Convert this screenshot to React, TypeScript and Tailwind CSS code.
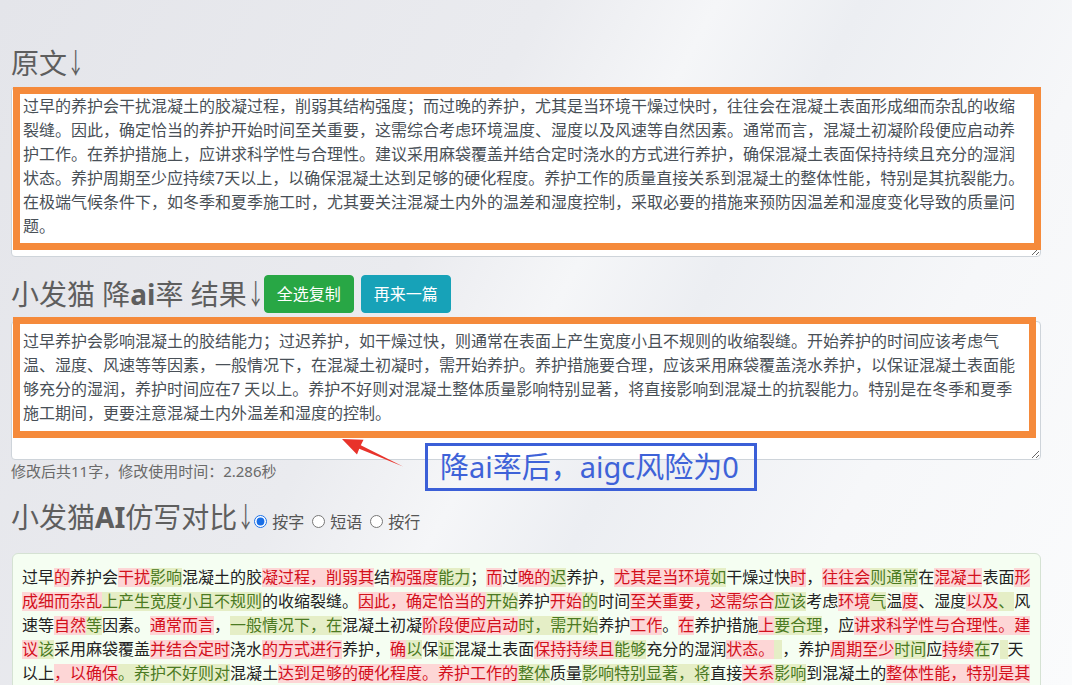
import React from "react";

type Seg = [number, string];

const ORIG = [
  "过早的养护会干扰混凝土的胶凝过程，削弱其结构强度；而过晚的养护，尤其是当环境干燥过快时，往往会在混凝土表面形成细而杂乱的收缩",
  "裂缝。因此，确定恰当的养护开始时间至关重要，这需综合考虑环境温度、湿度以及风速等自然因素。通常而言，混凝土初凝阶段便应启动养",
  "护工作。在养护措施上，应讲求科学性与合理性。建议采用麻袋覆盖并结合定时浇水的方式进行养护，确保混凝土表面保持持续且充分的湿润",
  "状态。养护周期至少应持续7天以上，以确保混凝土达到足够的硬化程度。养护工作的质量直接关系到混凝土的整体性能，特别是其抗裂能力。",
  "在极端气候条件下，如冬季和夏季施工时，尤其要关注混凝土内外的温差和湿度控制，采取必要的措施来预防因温差和湿度变化导致的质量问",
  "题。",
].join("\n");

const RESULT = [
  "过早养护会影响混凝土的胶结能力；过迟养护，如干燥过快，则通常在表面上产生宽度小且不规则的收缩裂缝。开始养护的时间应该考虑气",
  "温、湿度、风速等等因素，一般情况下，在混凝土初凝时，需开始养护。养护措施要合理，应该采用麻袋覆盖浇水养护，以保证混凝土表面能",
  "够充分的湿润，养护时间应在7 天以上。养护不好则对混凝土整体质量影响特别显著，将直接影响到混凝土的抗裂能力。特别是在冬季和夏季",
  "施工期间，更要注意混凝土内外温差和湿度的控制。",
].join("\n");

const DIFF: Seg[][] = [
  [
    [0, "过早"], [1, "的"], [0, "养护会"], [1, "干扰"], [2, "影响"], [0, "混凝土的胶"],
    [1, "凝过程，削弱其"], [0, "结"], [1, "构强度"], [2, "能力"], [0, "；"], [1, "而"],
    [0, "过"], [1, "晚的"], [2, "迟"], [0, "养护，"], [1, "尤其是当环境"], [2, "如"],
    [0, "干燥过快"], [1, "时"], [0, "，"], [1, "往往会"], [2, "则通常"], [0, "在"],
    [1, "混凝土"], [0, "表面"], [1, "形"],
  ],
  [
    [1, "成细而杂乱"], [2, "上产生宽度小且不规则"], [0, "的收缩裂缝。"], [1, "因此，确定恰当的"],
    [2, "开始"], [0, "养护"], [1, "开始"], [2, "的"], [0, "时间"], [1, "至关重要，这需综合"],
    [2, "应该"], [0, "考虑"], [1, "环境"], [2, "气"], [0, "温"], [1, "度"], [0, "、湿度"],
    [1, "以及"], [2, "、"], [0, "风"],
  ],
  [
    [0, "速等"], [1, "自然"], [2, "等"], [0, "因素。"], [1, "通常而言"], [0, "，"],
    [2, "一般情况下，在"], [0, "混凝土初凝"], [1, "阶段便应启动"], [2, "时，需开始"],
    [0, "养护"], [1, "工作"], [0, "。"], [1, "在"], [0, "养护措施"], [1, "上"], [2, "要合理"],
    [0, "，应"], [1, "讲求科学性与合理性。建"],
  ],
  [
    [1, "议"], [2, "该"], [0, "采用麻袋覆盖"], [1, "并结合定时"], [0, "浇水"], [1, "的方式进行"],
    [0, "养护，"], [1, "确"], [2, "以"], [0, "保"], [2, "证"], [0, "混凝土表面"], [1, "保持持续且"],
    [2, "能够"], [0, "充分的湿润"], [1, "状态。"], [2, " "], [0, "，养护"], [1, "周期至少"],
    [2, "时间"], [0, "应"], [1, "持续"], [2, "在"], [0, "7"], [2, " "], [0, "天"],
  ],
  [
    [0, "以上"], [1, "，以确保"], [2, "。养护不好则对"], [0, "混凝土"],
    [1, "达到足够的硬化程度。养护工作的"], [2, "整体"], [0, "质量"], [2, "影响特别显著，将"],
    [0, "直接"], [1, "关系"], [2, "影响"], [0, "到混凝土的"], [1, "整体性能，特别是其"],
  ],
  [
    [1, "抗裂能力。在极端气候条件下，如"], [2, "的抗裂能力。特别是在"], [0, "冬季和夏季施工"],
    [1, "时，尤其"], [2, "期间，更"], [0, "要"], [1, "关"], [0, "注"], [1, "意"], [0, "混凝土内外"],
  ],
];

function Piece({ t, s }: { t: number; s: string }) {
  if (t === 0) return <span>{s}</span>;
  if (t === 1)
    return (
      <span className="inline-block leading-[19px] bg-[#fdd6d6] text-[#d3101c]">{s}</span>
    );
  if (s === " ")
    return <span className="inline-block leading-[19px] w-[8px] bg-[#e5eec6]">&nbsp;</span>;
  return <span className="inline-block leading-[19px] bg-[#e5eec6] text-[#4b7a22]">{s}</span>;
}

function Down() {
  return <span className="inline-block w-[14px] origin-left scale-x-[0.62]">↓</span>;
}

export default function App() {
  return (
    <div className="relative h-[685px] w-[1072px] overflow-hidden bg-[linear-gradient(118deg,#e4e5ea_0%,#eaebef_38%,#f5f6f8_50%,#eceef2_60%,#f6f7f9_78%,#fafbfc_100%)] font-['Noto_Sans','Noto_Sans_CJK_SC',sans-serif]">
      <div className="ml-[11px] w-[1030px] pt-[46px]">
        <h3 className="text-[28px] leading-[34px] font-normal text-[#5e5e5e] mb-[7px]">
          原文<Down />
        </h3>
        <div className="relative">
          <textarea
            readOnly
            wrap="off"
            defaultValue={ORIG}
            className="block w-full h-[170px] overflow-hidden rounded-[4px] border border-[#ced4da] bg-white pl-[11px] pr-3 py-[6px] text-[16px] leading-6 text-[#495057] font-['Noto_Sans','Noto_Sans_CJK_SC',sans-serif] outline-none"
          />
          <div className="pointer-events-none absolute left-[2px] top-0 right-0 bottom-[7px] border-[7px] border-[#f58a3b]" />
        </div>

        <div className="mt-[18px] flex items-center">
          <h3 className="text-[28px] leading-[34px] font-normal text-[#5e5e5e]">
            小发猫 降<span className="font-bold">ai</span>率 结果<Down />
          </h3>
          <div className="ml-[3px] flex gap-[7px]">
            <button className="h-[38px] w-[90px] rounded-[4px] border border-[#28a745] bg-[#28a745] text-[16px] leading-6 text-white">
              全选复制
            </button>
            <button className="h-[38px] w-[90px] rounded-[4px] border border-[#17a2b8] bg-[#17a2b8] text-[16px] leading-6 text-white">
              再来一篇
            </button>
          </div>
        </div>

        <div className="relative mt-[8px]">
          <textarea
            readOnly
            wrap="off"
            defaultValue={RESULT}
            className="block w-full h-[139px] overflow-hidden rounded-[4px] border border-[#ced4da] bg-white pl-[11px] pr-3 pt-[7px] pb-[6px] text-[16px] leading-6 text-[#495057] font-['Noto_Sans','Noto_Sans_CJK_SC',sans-serif] outline-none"
          />
          <div className="pointer-events-none absolute left-[2px] top-[-4px] right-[5px] bottom-[22px] border-[7px] border-[#f58a3b]" />
        </div>

        <p className="text-[15px] leading-[22px] text-[#6a6a6a]">修改后共11字，修改使用时间：2.286秒</p>

        <div className="mt-[18px] flex items-baseline">
          <h3 className="text-[28px] leading-[34px] font-normal text-[#5e5e5e]">
            小发猫<span className="font-bold">AI</span>仿写对比<Down />
          </h3>
          <div className="ml-[3px] flex items-baseline gap-[8px] text-[16px] leading-6 text-[#555]">
            <label className="inline-flex items-center gap-[5px]">
              <input type="radio" name="mode" defaultChecked className="h-[13px] w-[13px] accent-[#1a6fe6]" />
              <span>按字</span>
            </label>
            <label className="inline-flex items-center gap-[5px]">
              <input type="radio" name="mode" className="h-[13px] w-[13px]" />
              <span>短语</span>
            </label>
            <label className="inline-flex items-center gap-[5px]">
              <input type="radio" name="mode" className="h-[13px] w-[13px]" />
              <span>按行</span>
            </label>
          </div>
        </div>

        <div className="mt-[19px] ml-[1px] w-[1029px] rounded-[6px] border border-[#d5e2d3] bg-[#f5fef2] pl-[9px] pr-[10px] pt-[11px] pb-[12px] text-[16px] leading-6 text-[#222]">
          {DIFF.map((line, i) => (
            <div key={i} className="whitespace-nowrap">
              {line.map(([t, s], j) => (
                <Piece key={j} t={t} s={s} />
              ))}
            </div>
          ))}
        </div>
      </div>

      {/* annotation: red arrow */}
      <svg className="absolute left-[335px] top-[432px]" width="75" height="40" viewBox="0 0 75 40">
        <polygon points="7,7 28.5,7.8 25.8,13.2 68,34.5 24.2,16.8 22,22.4" fill="#e8332b" />
      </svg>

      {/* annotation: blue box */}
      <div className="absolute left-[425px] top-[443px] flex h-[48px] w-[332px] items-center border-[3px] border-[#3b5fd7] pl-[12px] text-[29px] leading-[36px] text-[#3e62d8]">
        降ai率后，aigc风险为0
      </div>
    </div>
  );
}
